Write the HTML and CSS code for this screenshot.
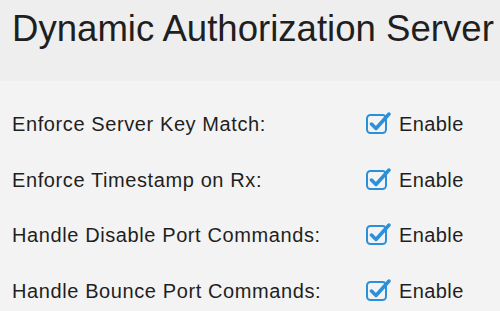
FILE: index.html
```html
<!DOCTYPE html>
<html lang="en">
<head>
  <meta charset="UTF-8">
  <title>Dynamic Authorization Server</title>
  <link rel="stylesheet" href="styles.css">
</head>
<body>
  <div class="page-header">
    <h1 class="page-title">Dynamic Authorization Server</h1>
  </div>

  <div class="settings">
    <div class="setting-row">
      <span class="setting-label">Enforce Server Key Match:</span>
      <label class="check">
        <svg class="check-icon" viewBox="0 0 26 22"><rect x="1" y="3" width="19" height="18" rx="3.5"/><path d="M5.5 12 L10 16.5 L23 2"/></svg>
        Enable
      </label>
    </div>
    <div class="setting-row">
      <span class="setting-label">Enforce Timestamp on Rx:</span>
      <label class="check">
        <svg class="check-icon" viewBox="0 0 26 22"><rect x="1" y="3" width="19" height="18" rx="3.5"/><path d="M5.5 12 L10 16.5 L23 2"/></svg>
        Enable
      </label>
    </div>
    <div class="setting-row">
      <span class="setting-label">Handle Disable Port Commands:</span>
      <label class="check">
        <svg class="check-icon" viewBox="0 0 26 22"><rect x="1" y="3" width="19" height="18" rx="3.5"/><path d="M5.5 12 L10 16.5 L23 2"/></svg>
        Enable
      </label>
    </div>
    <div class="setting-row">
      <span class="setting-label">Handle Bounce Port Commands:</span>
      <label class="check">
        <svg class="check-icon" viewBox="0 0 26 22"><rect x="1" y="3" width="19" height="18" rx="3.5"/><path d="M5.5 12 L10 16.5 L23 2"/></svg>
        Enable
      </label>
    </div>
  </div>
</body>
</html>
```

FILE: styles.css
```css
:root {
  --header-bg: #eeeeee;
  --page-bg: #f3f3f3;
  --text-color: #1f1f1f;
  --check-color: #2b8fd9;
}

body {
  margin: 0;
  background-color: var(--page-bg);
  font-family: "Liberation Sans", Arial, sans-serif;
  color: var(--text-color);
}

.page-header {
  background-color: var(--header-bg);
  height: 81px;
  padding: 0 12px;
}

.page-title {
  margin: 0;
  padding-top: 8px;
  font-size: 36.6px;
  font-weight: 400;
  line-height: 42px;
  white-space: nowrap;
}

.settings {
  padding: 16px 12px 0;
  display: flex;
  flex-direction: column;
}

.setting-row {
  display: flex;
  align-items: center;
  height: 55.5px;
}

.setting-label {
  width: 354px;
  font-size: 20px;
  letter-spacing: 0.6px;
  white-space: nowrap;
}

.check {
  display: flex;
  align-items: center;
  gap: 7px;
  font-size: 20px;
  letter-spacing: 0.4px;
}

.check-icon {
  width: 26px;
  height: 22px;
  margin-top: -3px;
  fill: none;
  stroke: var(--check-color);
}

.check-icon rect {
  stroke-width: 2;
}

.check-icon path {
  stroke-width: 3.5;
  stroke-linecap: round;
  stroke-linejoin: round;
}
```
